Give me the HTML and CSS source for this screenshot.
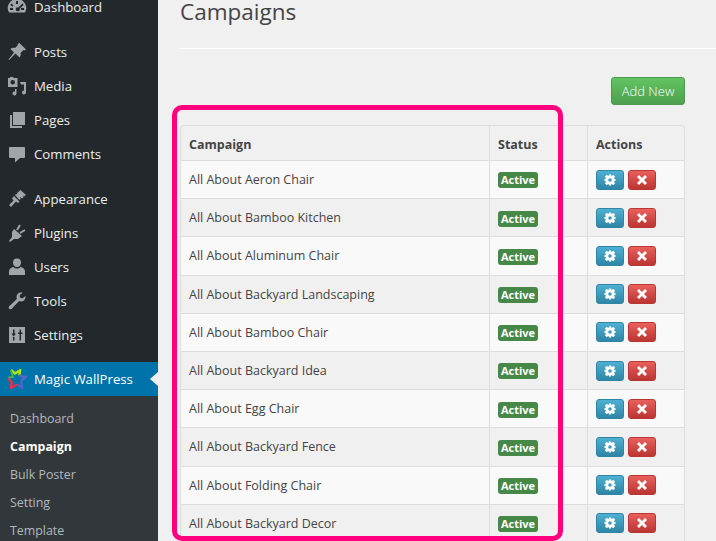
FILE: index.html
```html
<!DOCTYPE html>
<html>
  <head>
    <title>Campaigns</title>
    <link rel="stylesheet" href="styles.css">
  </head>
  <body>
    <div class="page">
      <div class="sidebar">
        <ul class="menu">
          <li><svg class="icon" viewBox="0 0 20 20"><path d="M10 2a9 9 0 0 0-8 13.500h16A9 9 0 0 0 10 2zM9 4h2v3H9zM4.500 6.500l2 2-1.200 1.200-2-2zM15.500 6.500l1.200 1.200-4 4a2 2 0 1 1-1.300-1.300zM3 11h3v2H3zM14 11h3v2h-3z" fill-rule="evenodd"/></svg><span>Dashboard</span></li>
          <li class="gap"><svg class="icon" viewBox="0 0 20 20"><path d="M12.500 1l6.500 6.500-1.500 1-1-.5-3 3c.5 2 0 3.500-1 4.500L8.500 11.500 2 18l-.5-.5L7 10.500 3.500 7C4.500 6 6 5.500 8 6l3-3-.5-1z"/></svg><span>Posts</span></li>
          <li><svg class="icon" viewBox="0 0 20 20"><path d="M3 1h3l1 1h3.500v9H1V2h2zM5.700 4a2.300 2.300 0 1 0 0 4.600 2.300 2.300 0 0 0 0-4.600zM13 6h6v10.500a2 2 0 1 1-2-2V8.500h-3zM9.500 13v4.500a2 2 0 1 1-1.500-2V13z" fill-rule="evenodd"/></svg><span>Media</span></li>
          <li><svg class="icon" viewBox="0 0 20 20"><path d="M6 2h12v13H6zM3 5h2v11h10v2H3z"/></svg><span>Pages</span></li>
          <li><svg class="icon" viewBox="0 0 20 20"><path d="M3 3h14a1 1 0 0 1 1 1v9a1 1 0 0 1-1 1h-4l-5 4.500V14H3a1 1 0 0 1-1-1V4a1 1 0 0 1 1-1z"/></svg><span>Comments</span></li>
          <li class="gap"><svg class="icon" viewBox="0 0 20 20"><path d="M13.500 1l5.500 5-2 1.500L16 6.500l.5 2-1.500 1-2-1.500.5 2-1 1L8 6l1-1 1.500.5-.5-1.500zM7 7l5.500 5.500-1.500 1.500-2-1.500L4 18l-2-2 4.500-4.500L5 9.500z"/></svg><span>Appearance</span></li>
          <li><svg class="icon" viewBox="0 0 20 20"><path d="M7 6l8 7-4 3H7l-4 3-1-1 3-4V9z"/><path d="M10 7l3-5M13 10l5-3" fill="none" stroke="#a0a5aa" stroke-width="2"/></svg><span>Plugins</span></li>
          <li><svg class="icon" viewBox="0 0 20 20"><path d="M10 1.500a4 4 0 0 1 4 4c0 2.500-1.500 4.500-4 4.500S6 8 6 5.500a4 4 0 0 1 4-4zM6.500 10c1 1 2.200 1.500 3.500 1.500s2.500-.5 3.500-1.500c2.500.5 4.500 2 4.500 4.500V18H2v-3.500C2 12 4 10.500 6.500 10z"/></svg><span>Users</span></li>
          <li><svg class="icon" viewBox="0 0 20 20"><path d="M14 1.500c-2.500 0-4.500 2-4.500 4.500 0 .7.200 1.300.4 1.900L2 15.500a1.800 1.800 0 0 0 2.500 2.500l7.600-7.900c.6.200 1.200.4 1.900.4 2.500 0 4.500-2 4.500-4.500l-.2-1-3 2.500-2.500-1V4l3-2.300z"/></svg><span>Tools</span></li>
          <li><svg class="icon" viewBox="0 0 20 20"><path d="M2 2h16v16H2zM6 4.500v4H4.500l2.200 3 2.300-3H7.500v-4zM7.500 12H6v3.500h1.500zM12.500 4.500v3H11v1.500h1.500v6.500H14V9h1.500V7.500H14v-3z" fill-rule="evenodd"/></svg><span>Settings</span></li>
          <li class="current">
            <svg class="icon" viewBox="0 0 20 20"><path d="M4 1l4 3.500L13 1.500l-.5 5" fill="none" stroke="#b5e51d" stroke-width="2.500"/><path d="M12 6.500l6.500 1.500-4 3.500" fill="none" stroke="#5b63c9" stroke-width="2.500"/><path d="M14 11.500l1 7-5-3" fill="none" stroke="#5b63c9" stroke-width="2"/><path d="M10 15.500L4 19l.5-6-3.500-4" fill="none" stroke="#e8304a" stroke-width="2.500"/><path d="M1.500 8.500l4.500-.5L4 1.500" fill="none" stroke="#3fb54a" stroke-width="2"/></svg>
            <span>Magic WallPress</span>
          </li>
        </ul>
        <ul class="submenu">
          <li>Dashboard</li>
          <li class="on">Campaign</li>
          <li>Bulk Poster</li>
          <li>Setting</li>
          <li>Template</li>
        </ul>
      </div>
      <div class="main">
        <h1>Campaigns</h1>
        <div class="actions-bar">
          <a class="add-btn">Add New</a>
        </div>
        <table class="campaigns" id="campaigns">
          <thead>
            <tr><th class="col-name">Campaign</th><th class="col-status">Status</th><th>Actions</th></tr>
          </thead>
          <tbody></tbody>
        </table>
        <div class="highlight"></div>
      </div>
    </div>
    <script>
      var names = [
        "All About Aeron Chair", "All About Bamboo Kitchen", "All About Aluminum Chair",
        "All About Backyard Landscaping", "All About Bamboo Chair", "All About Backyard Idea",
        "All About Egg Chair", "All About Backyard Fence", "All About Folding Chair", "All About Backyard Decor"
      ];
      var cog = '<svg viewBox="0 0 12 12"><path fill-rule="evenodd" d="M5 .5h2l.3 1.500 1-.4L9.500 1l1.500 1.500-.6 1.200-.4 1 1.500.3v2l-1.500.3.4 1 .6 1.200L9.500 11l-1.200-.6-1-.4-.3 1.500H5l-.3-1.500-1 .4L2.500 11 1 9.500l.6-1.200.4-1L.5 7V5l1.500-.3-.4-1L1 2.500 2.500 1l1.200.6 1 .4zM6 4.200a1.800 1.800 0 1 0 0 3.600 1.800 1.800 0 0 0 0-3.600z"/></svg>';
      var cross = '<svg viewBox="0 0 12 12"><path d="M3 1l3 3 3-3 2 2-3 3 3 3-2 2-3-3-3 3-2-2 3-3-3-3z"/></svg>';
      var body = document.querySelector("#campaigns tbody");
      for (var i = 0; i < names.length; i++) {
        var row = document.createElement("tr");
        row.innerHTML = '<td>' + names[i] + '</td>' +
          '<td><span class="badge">Active</span></td>' +
          '<td><span class="btn btn-blue">' + cog + '</span><span class="btn btn-red">' + cross + '</span></td>';
        body.appendChild(row);
      }
    </script>
  </body>
</html>
```

FILE: styles.css
```css
html, body {
  margin: 0;
  height: 541px;
  overflow: hidden;
}

body {
  font-family: "Open Sans", sans-serif;
  background-color: #f0f0f0;
  color: #444;
}

.page {
  display: flex;
  height: 541px;
  overflow: hidden;
}

.sidebar {
  width: 158px;
  flex-shrink: 0;
  background-color: #23282d;
  color: #eee;
  font-size: 13.200px;
}

.sidebar ul {
  list-style: none;
  margin: 0;
  padding: 0;
}

.menu {
  margin-top: -10px !important;
}

.menu li {
  display: flex;
  align-items: center;
  height: 34px;
  line-height: 14px;
  padding-left: 7px;
}

.menu li.gap {
  margin-top: 11px;
}

.icon {
  width: 20px;
  height: 20px;
  margin-right: 7px;
  fill: #a0a5aa;
  flex-shrink: 0;
}

.menu li.current {
  position: relative;
  margin-top: 10px;
  background-color: #0073aa;
  color: #fff;
}

.menu li.current::after {
  content: "";
  position: absolute;
  right: 0;
  top: 10px;
  width: 0;
  height: 0;
  border-top: 7px solid transparent;
  border-bottom: 7px solid transparent;
  border-right: 8px solid #f0f0f0;
}

.submenu {
  background-color: #32373c;
  padding-top: 9px !important;
  font-size: 12.400px;
  color: #b4b9be;
}

.submenu li {
  height: 28px;
  line-height: 28px;
  padding-left: 10px;
}

.submenu li.on {
  color: #fff;
  font-weight: 700;
}

.main {
  position: relative;
  flex: 1;
  padding: 0 31px 0 22px;
}

h1 {
  margin: 0 -31px 0 0;
  padding-bottom: 24px;
  height: 24px;
  font-size: 22.500px;
  line-height: 24px;
  font-weight: 400;
  color: #444;
  border-bottom: 1px solid #fff;
}

.actions-bar {
  display: flex;
  justify-content: flex-end;
  margin-top: 28px;
  height: 28px;
}

.add-btn {
  width: 72px;
  height: 26px;
  line-height: 26px;
  text-align: center;
  font-size: 13px;
  font-weight: 300;
  color: #fff;
  border: 1px solid #4b9a4b;
  border-radius: 3px;
  background: linear-gradient(#62c462, #4e9f4e);
}

.campaigns {
  width: 505px;
  margin-top: 20px;
  border-collapse: separate;
  border-spacing: 0;
  table-layout: fixed;
  font-size: 12.500px;
  border-top: 1px solid #ddd;
  border-left: 1px solid #ddd;
  border-right: 1px solid #ddd;
  border-radius: 4px 4px 0 0;
}

.campaigns th {
  height: 32px;
  padding: 2px 8px 0;
  text-align: left;
  font-weight: 700;
  border-bottom: 1px solid #ddd;
  border-left: 1px solid #ddd;
}

.campaigns td {
  height: 37.200px;
  padding: 0 8px;
  border-bottom: 1px solid #ddd;
  border-left: 1px solid #ddd;
}

.campaigns th:first-child, .campaigns td:first-child {
  border-left: none;
}

.campaigns .col-name {
  width: 292px;
}

.campaigns .col-status {
  width: 81px;
}

.campaigns tbody tr:nth-child(odd) td {
  background-color: #f9f9f9;
}

.badge {
  display: inline-block;
  width: 40px;
  height: 16px;
  line-height: 15px;
  text-align: center;
  font-size: 11px;
  font-weight: 700;
  color: #fff;
  background-color: #468847;
  border-radius: 3px;
  vertical-align: middle;
}

.btn {
  display: inline-flex;
  align-items: center;
  justify-content: center;
  width: 28px;
  height: 20px;
  border-radius: 3px;
  vertical-align: middle;
  box-sizing: border-box;
}

.btn svg {
  width: 12px;
  height: 12px;
  fill: #fff;
}

.btn-blue {
  background: linear-gradient(#4fb0d2, #2f85a5);
  border: 1px solid #2f85a5;
  margin-right: 4px;
}

.btn-red {
  background: linear-gradient(#e9605c, #bb3532);
  border: 1px solid #bb3532;
}

.highlight {
  position: absolute;
  left: 14px;
  top: 105px;
  width: 381px;
  height: 426px;
  border: 5px solid #ff007f;
  border-radius: 10px;
}
```
